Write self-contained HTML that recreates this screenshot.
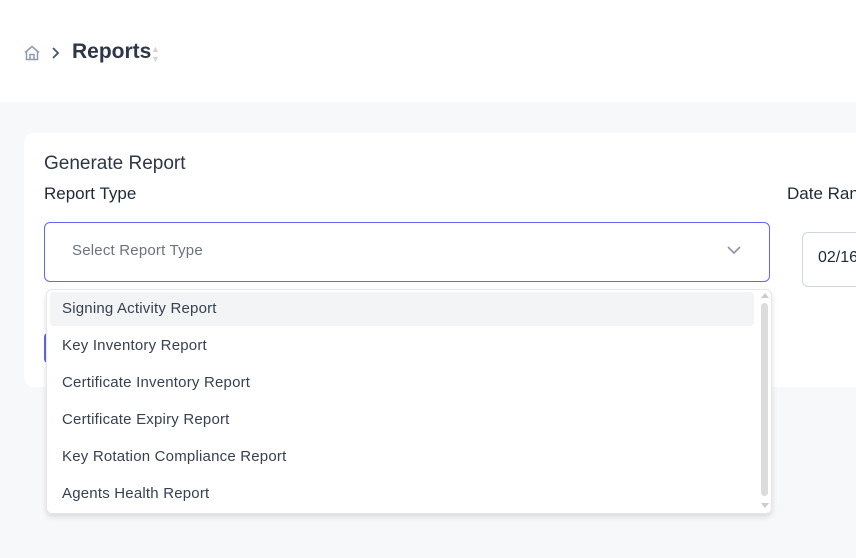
<!DOCTYPE html>
<html><head><style>
body{margin:0;width:856px;height:558px;overflow:hidden;background:#f7f8fa;font-family:"Liberation Sans",sans-serif;position:relative;color:#2d3748}
.top{position:absolute;left:0;top:0;width:856px;height:102px;background:#fff}
.card{position:absolute;left:24px;top:133px;width:850px;height:254px;background:#fff;border-radius:10px}
.abs{position:absolute;white-space:nowrap}
.item{position:absolute;left:15px;font-size:15px;color:#374151;letter-spacing:0.2px}
</style></head><body>
<div class="top">
<svg class="abs" style="left:23px;top:44px" width="18" height="18" viewBox="0 0 18 18" fill="none" stroke="#8b9ab5" stroke-width="1.5"><path d="M2 8.5L9 2.5l7 6M3.5 7.2V15.5h11V7.2M7 15.5V10.5h4v5"/></svg>
<svg class="abs" style="left:50px;top:46px" width="12" height="14" viewBox="0 0 12 14" fill="none" stroke="#4a5568" stroke-width="1.8"><path d="M3 2l5 5-5 5"/></svg>
<div class="abs" style="left:72px;top:40px;font-size:21px;font-weight:bold;color:#2d3748">Reports</div>
<div class="abs" style="left:151px;top:44px;font-size:9px;color:#d4d4d4;line-height:10px">▲<br>▼</div>
</div>
<div class="card">
<div class="abs" style="left:20px;top:20px;font-size:19px;color:#2d3748">Generate Report</div>
<div class="abs" style="left:20px;top:51px;font-size:17px;color:#1f2937">Report Type</div>
<div class="abs" style="left:763px;top:51px;font-size:17px;color:#1f2937">Date Range</div>
<div class="abs" style="left:20px;top:89px;width:724px;height:58px;border:1px solid #6366f1;border-radius:6px"></div>
<div class="abs" style="left:48px;top:109px;font-size:15px;color:#6b7280;letter-spacing:0.2px">Select Report Type</div>
<svg class="abs" style="left:702px;top:112px" width="16" height="10" viewBox="0 0 16 10" fill="none" stroke="#8a94a6" stroke-width="1.6"><path d="M2 2l6 6 6-6"/></svg>
<div class="abs" style="left:778px;top:99px;width:100px;height:53px;border:1px solid #d1d5e0;border-radius:6px"></div>
<div class="abs" style="left:794px;top:116px;font-size:16px;color:#1f2937">02/16</div>
<div class="abs" style="left:20px;top:200px;width:10px;height:30px;background:#6366f1;border-radius:4px 0 0 4px"></div>
</div>
<div class="abs" style="left:46px;top:289px;width:724px;height:223px;background:#fff;border:1px solid #e5e7eb;border-radius:6px;box-shadow:0 3px 6px rgba(0,0,0,.12)">
<div class="abs" style="left:3px;top:2px;width:704px;height:34px;background:#f3f4f6;border-radius:4px"></div>
<div class="item" style="top:10px">Signing Activity Report</div>
<div class="item" style="top:47px">Key Inventory Report</div>
<div class="item" style="top:84px">Certificate Inventory Report</div>
<div class="item" style="top:121px">Certificate Expiry Report</div>
<div class="item" style="top:158px">Key Rotation Compliance Report</div>
<div class="item" style="top:195px">Agents Health Report</div>
<div class="abs" style="left:714px;top:3px;width:0;height:0;border-left:4px solid transparent;border-right:4px solid transparent;border-bottom:5px solid #ccc"></div>
<div class="abs" style="left:714px;top:13px;width:7px;height:193px;background:#dcdcdc;border-radius:4px"></div>
<div class="abs" style="left:714px;top:213px;width:0;height:0;border-left:4px solid transparent;border-right:4px solid transparent;border-top:5px solid #ccc"></div>
</div>
</body></html>
